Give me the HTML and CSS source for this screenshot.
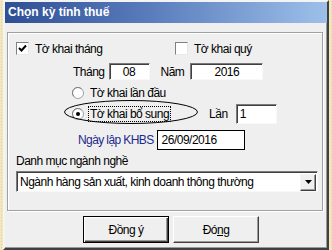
FILE: index.html
```html
<!DOCTYPE html>
<html lang="vi">
<head>
<meta charset="UTF-8">
<title>Chọn kỳ tính thuế</title>
<link rel="stylesheet" href="styles.css">
</head>
<body>
<div class="dialog">
    <div class="titlebar">Chọn kỳ tính thuế</div>

    <div class="group">
        <div class="row row-check">
            <label class="check first">
                <span class="box"><svg width="9" height="9" viewBox="0 0 9 9"><path d="M1 4 L3.5 6.5 L8 1.5" fill="none" stroke="#000" stroke-width="2"/></svg></span>
                Tờ khai tháng
            </label>
            <label class="check">
                <span class="box"></span>
                Tờ khai quý
            </label>
        </div>

        <div class="row row-period">
            <span class="lbl-thang">Tháng</span>
            <span class="field f-thang">08</span>
            <span class="lbl-nam">Năm</span>
            <span class="field f-nam">2016</span>
        </div>

        <div class="row row-radio1">
            <span class="radio"><svg width="12" height="12" viewBox="0 0 12 12"><circle cx="6" cy="6" r="5.5" fill="#fff" stroke="#a0a0a0"/><path d="M2 9.5 A5 5 0 0 1 9.5 2" fill="none" stroke="#808080"/></svg></span>
            <span class="radio-text">Tờ khai lần đầu</span>
        </div>

        <div class="row row-radio2">
            <span class="radio"><svg width="12" height="12" viewBox="0 0 12 12"><circle cx="6" cy="6" r="5.5" fill="#fff" stroke="#a0a0a0"/><path d="M2 9.5 A5 5 0 0 1 9.5 2" fill="none" stroke="#808080"/><circle cx="6" cy="6" r="2" fill="#000"/></svg></span>
            <span class="radio-text focus">Tờ khai bổ sung</span>
            <span class="lbl-lan">Lần</span>
            <span class="field f-lan">1</span>
        </div>

        <div class="row row-khbs">
            <span class="lbl-khbs">Ngày lập KHBS</span>
            <span class="field flat f-khbs">26/09/2016</span>
        </div>

        <div class="row row-danhmuc">Danh mục ngành nghề</div>

        <div class="row row-select">
            <div class="select">
                <span class="select-text">Ngành hàng sản xuất, kinh doanh thông thường</span>
                <span class="select-btn"><svg width="7" height="4" viewBox="0 0 7 4"><path d="M0 0 H7 L3.5 4 Z" fill="#000"/></svg></span>
            </div>
        </div>
    </div>

    <div class="buttons">
        <button class="btn default">Đồng ý</button>
        <button class="btn">Đó<u>ng</u></button>
    </div>

    <svg class="mark" width="136" height="26" viewBox="0 0 136 26"><ellipse cx="68" cy="13" rx="66.5" ry="11.5" fill="none" stroke="#000" stroke-width="1"/></svg>
</div>
</body>
</html>
```

FILE: styles.css
```css
body {
    margin: 0;
    width: 332px;
    height: 250px;
    overflow: hidden;
    background: #f1e6bd;
    background-image: radial-gradient(#e6d49a 0.6px, transparent 0.8px);
    background-size: 3px 3px;
    font-family: "Liberation Sans", Arial, sans-serif;
    font-size: 12px;
    letter-spacing: -0.5px;
    color: #000;
}

.dialog {
    position: relative;
    margin-left: 3px;
    width: 322px;
    height: 246px;
    background: #efefef;
    border: 2px solid;
    border-color: #f4f4f4 #404040 #404040 #f4f4f4;
    box-shadow: inset -1px -1px #9a9a9a;
}

.titlebar {
    height: 21px;
    line-height: 20px;
    padding-left: 3px;
    color: #fff;
    font-weight: bold;
    font-size: 12px;
    letter-spacing: 0;
    background: linear-gradient(to right, #2f4f95, #5a7cbc 45%, #9dc0ea);
}

.group {
    margin: 9px 0 0 2px;
    width: 314px;
    height: 177px;
    border: 1px solid #a0a0a0;
    box-shadow: inset 1px 1px #fff, 1px 1px #fff;
}

.row {
    display: flex;
    align-items: center;
}

.row-check {
    margin-top: 9px;
    height: 13px;
    padding-left: 8px;
}

.check {
    display: flex;
    align-items: center;
}

.check.first {
    width: 159px;
}

.box {
    width: 11px;
    height: 11px;
    margin-right: 6px;
    background: #fff;
    border: 1px solid;
    border-color: #808080 #e8e8e8 #e8e8e8 #808080;
    display: flex;
    align-items: center;
    justify-content: center;
}

.row-period {
    margin-top: 8px;
    height: 17px;
    padding-left: 65px;
}

.field {
    box-sizing: border-box;
    height: 17px;
    line-height: 14px;
    background: #fff;
    border: 1px solid;
    border-color: #7a7a7a #f8f8f8 #f8f8f8 #7a7a7a;
    box-shadow: inset 1px 1px #404040;
    padding: 1px 3px 0;
}

.f-thang {
    width: 41px;
    margin-left: 4px;
    text-align: center;
}

.lbl-nam {
    margin-left: 11px;
}

.f-nam {
    width: 73px;
    margin-left: 6px;
    text-align: center;
}

.row-radio1 {
    margin-top: 6px;
    height: 14px;
    padding-left: 64px;
}

.radio {
    width: 12px;
    height: 12px;
    display: flex;
}

.radio-text {
    margin-left: 6px;
}

.row-radio2 {
    margin-top: 4px;
    height: 20px;
    padding-left: 64px;
}

.radio-text.focus {
    margin-left: 4px;
    padding: 0 1px;
    border: 1px dotted #000;
}

.lbl-lan {
    margin-left: 38px;
}

.f-lan {
    width: 41px;
    height: 20px;
    line-height: 17px;
    margin-left: 8px;
}

.row-khbs {
    margin-top: 6px;
    height: 20px;
    padding-left: 70px;
}

.lbl-khbs {
    color: #1e2a8c;
    letter-spacing: -0.6px;
}

.field.flat {
    height: 20px;
    line-height: 18px;
    width: 88px;
    margin-left: 3px;
    border: 1px solid #000;
    box-shadow: none;
    padding: 0 4px;
}

.row-danhmuc {
    margin-top: 4px;
    height: 13px;
    padding-left: 8px;
}

.row-select {
    margin-top: 4px;
    padding-left: 8px;
}

.select {
    box-sizing: border-box;
    width: 302px;
    height: 21px;
    display: flex;
    align-items: center;
    justify-content: space-between;
    background: #fff;
    border: 1px solid;
    border-color: #7a7a7a #f8f8f8 #f8f8f8 #7a7a7a;
    box-shadow: inset 1px 1px #404040;
    padding: 1px 1px 0 3px;
}

.select-btn {
    box-sizing: border-box;
    width: 16px;
    height: 17px;
    display: flex;
    align-items: center;
    justify-content: center;
    background: #efefef;
    border: 1px solid;
    border-color: #f4f4f4 #404040 #404040 #f4f4f4;
    box-shadow: inset -1px -1px #9a9a9a;
}

.buttons {
    display: flex;
    margin: 5px 0 0 78px;
    gap: 4px;
}

.btn {
    box-sizing: border-box;
    width: 86px;
    height: 27px;
    padding: 0;
    font-family: inherit;
    font-size: 12px;
    letter-spacing: -0.5px;
    color: #000;
    background: #efefef;
    border: 1px solid;
    border-color: #fff #404040 #404040 #fff;
    box-shadow: inset -1px -1px #9a9a9a;
}

.btn.default {
    border: 1px solid #000;
    box-shadow: inset 1px 1px #fff, inset -1px -1px #404040, inset -2px -2px #9a9a9a;
}

.mark {
    position: absolute;
    left: 58px;
    top: 97px;
}
```
